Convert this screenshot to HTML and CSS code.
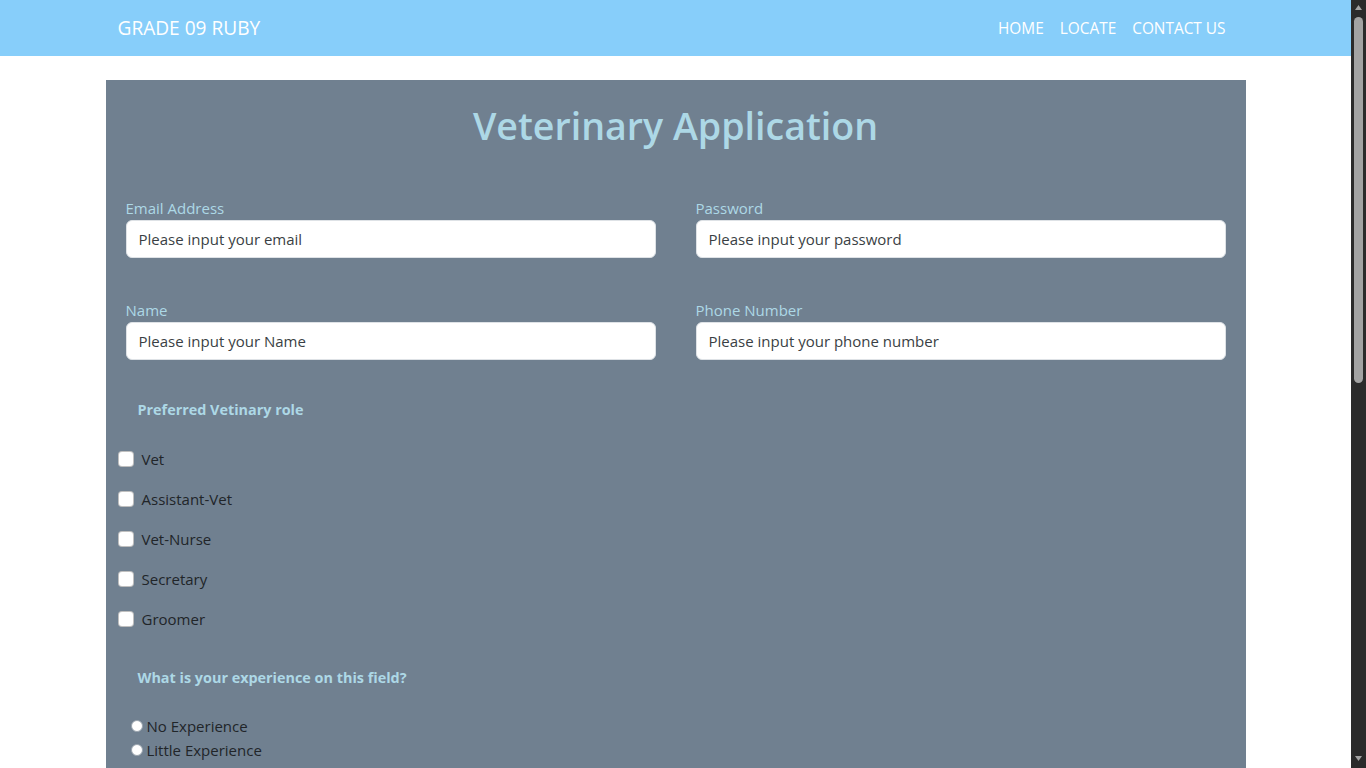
FILE: index.html
```html
<!DOCTYPE html>
<html lang="en">
<head>
<meta charset="utf-8">
<title>Veterinary Application</title>
<link rel="stylesheet" href="styles.css">
</head>
<body>
<nav class="navbar">
  <div class="nav-inner">
    <a class="brand" href="#">GRADE 09 RUBY</a>
    <ul class="nav-links">
      <li><a href="#">HOME</a></li>
      <li><a href="#">LOCATE</a></li>
      <li><a href="#">CONTACT US</a></li>
    </ul>
  </div>
</nav>
<main class="panel">
  <h1 class="title">Veterinary Application</h1>
  <form class="form">
    <div class="field-grid">
      <div class="field">
        <label class="field-label" for="email">Email Address</label>
        <input class="input" id="email" type="email" placeholder="Please input your email">
      </div>
      <div class="field">
        <label class="field-label" for="password">Password</label>
        <input class="input" id="password" type="password" placeholder="Please input your password">
      </div>
      <div class="field">
        <label class="field-label" for="name">Name</label>
        <input class="input" id="name" type="text" placeholder="Please input your Name">
      </div>
      <div class="field">
        <label class="field-label" for="phone">Phone Number</label>
        <input class="input" id="phone" type="tel" placeholder="Please input your phone number">
      </div>
    </div>

    <section class="group group-role">
      <h2 class="group-title">Preferred Vetinary role</h2>
      <div class="check-list">
        <label class="check"><input type="checkbox" class="checkbox"><span>Vet</span></label>
        <label class="check"><input type="checkbox" class="checkbox"><span>Assistant-Vet</span></label>
        <label class="check"><input type="checkbox" class="checkbox"><span>Vet-Nurse</span></label>
        <label class="check"><input type="checkbox" class="checkbox"><span>Secretary</span></label>
        <label class="check"><input type="checkbox" class="checkbox"><span>Groomer</span></label>
      </div>
    </section>

    <section class="group group-exp">
      <h2 class="group-title">What is your experience on this field?</h2>
      <div class="radio-list">
        <label class="radio-row"><input type="radio" name="exp" class="radio"><span>No Experience</span></label>
        <label class="radio-row"><input type="radio" name="exp" class="radio"><span>Little Experience</span></label>
        <label class="radio-row"><input type="radio" name="exp" class="radio"><span>Some Experience</span></label>
        <label class="radio-row"><input type="radio" name="exp" class="radio"><span>Experienced</span></label>
      </div>
    </section>

    <section class="group group-more">
      <h2 class="group-title">Why do you want to work with us?</h2>
      <textarea class="textarea" rows="6" placeholder="Tell us about yourself"></textarea>
      <div class="actions">
        <button type="submit" class="submit">Submit</button>
      </div>
    </section>
  </form>
</main>
<div class="scrollbar" aria-hidden="true">
  <svg class="sb-arrow sb-up" width="15" height="15" viewBox="0 0 15 15"><path d="M7.5 4 L11 9 L4 9 Z" fill="#a3a3a3"/></svg>
  <div class="sb-thumb"></div>
  <svg class="sb-arrow sb-down" width="15" height="15" viewBox="0 0 15 15"><path d="M4 4 L11 4 L7.5 9 Z" fill="#a3a3a3"/></svg>
</div>
</body>
</html>
```

FILE: styles.css
```css
html {
  overflow-y: scroll;
}
body {
  margin: 0 15px 0 0;
  font-family: "Open Sans", "Noto Sans", sans-serif;
  font-size: 15px;
  line-height: 1.5;
  color: #212529;
  background: #ffffff;
}
.scrollbar {
  position: fixed;
  top: 0;
  right: 0;
  width: 15px;
  height: 100vh;
  background: #2b2b2b;
}
.sb-arrow {
  position: absolute;
  left: 0;
  display: block;
}
.sb-up {
  top: 1px;
}
.sb-down {
  bottom: 1px;
}
.sb-thumb {
  position: absolute;
  top: 17px;
  left: 3px;
  width: 9px;
  height: 366px;
  border-radius: 5px;
  background: #a3a3a3;
}
.navbar {
  background: #87cefa;
  height: 56px;
}
.nav-inner {
  max-width: 1116px;
  margin: 0 auto;
  height: 100%;
  box-sizing: border-box;
  padding-top: 1px;
  display: flex;
  align-items: center;
  justify-content: space-between;
}
.brand {
  color: #ffffff;
  text-decoration: none;
  font-size: 19.1px;
}
.nav-links {
  list-style: none;
  margin: 0;
  padding: 0;
  display: flex;
}
.nav-links a {
  display: block;
  padding: 8px 8px;
  color: #ffffff;
  text-decoration: none;
  font-size: 15.4px;
}
.panel {
  max-width: 1140px;
  margin: 24px auto 0;
  background: #708090;
  padding: 0 0 60px;
}
.title {
  margin: 0;
  padding-top: 22px;
  text-align: center;
  font-size: 37.6px;
  font-weight: 600;
  line-height: 48px;
  color: #add8e6;
}
.form {
  padding-top: 46px;
}
.field-grid {
  display: grid;
  grid-template-columns: 1fr 1fr;
  column-gap: 40px;
  row-gap: 40px;
  padding: 0 20px;
}
.field {
  display: flex;
  flex-direction: column;
}
.field-label {
  color: #add8e6;
  line-height: 24px;
  height: 24px;
}
.input {
  height: 38px;
  box-sizing: border-box;
  border: 1px solid #dee2e6;
  border-radius: 6px;
  padding: 6px 12px;
  font-family: inherit;
  font-size: 15px;
  color: #212529;
  background: #ffffff;
}
.input::placeholder {
  color: #3a3f44;
  opacity: 1;
}
.group {
  padding: 0 12px;
}
.group-title {
  margin: 0;
  padding-left: 20px;
  font-size: 14.4px;
  font-weight: 700;
  line-height: 20px;
  color: #add8e6;
}
.group-role {
  margin-top: 40px;
}
.check-list {
  margin-top: 27px;
  display: flex;
  flex-direction: column;
  gap: 16px;
}
.check {
  display: flex;
  align-items: center;
  gap: 8px;
  line-height: 24px;
}
.checkbox {
  appearance: none;
  -webkit-appearance: none;
  margin: 0;
  width: 16px;
  height: 16px;
  background: #ffffff;
  border: 1px solid rgba(0, 0, 0, 0.25);
  border-radius: 4px;
  box-sizing: border-box;
}
.group-exp {
  margin-top: 37px;
}
.radio-list {
  margin-top: 26px;
  display: flex;
  flex-direction: column;
  padding-left: 13px;
}
.radio-row {
  display: flex;
  align-items: center;
  gap: 4px;
  line-height: 24px;
}
.radio {
  appearance: none;
  -webkit-appearance: none;
  margin: 0;
  width: 12px;
  height: 12px;
  border-radius: 50%;
  background: #ffffff;
  border: 1px solid #9aa4ae;
  box-sizing: border-box;
}
.group-more {
  margin-top: 40px;
}
.textarea {
  display: block;
  margin: 20px 20px 0;
  width: calc(100% - 40px);
  box-sizing: border-box;
  border: 1px solid #dee2e6;
  border-radius: 6px;
  padding: 6px 12px;
  font-family: inherit;
  font-size: 15px;
}
.actions {
  margin: 24px 20px 0;
}
.submit {
  font-family: inherit;
  font-size: 15px;
  color: #ffffff;
  background: #87cefa;
  border: none;
  border-radius: 6px;
  padding: 8px 24px;
}
```
